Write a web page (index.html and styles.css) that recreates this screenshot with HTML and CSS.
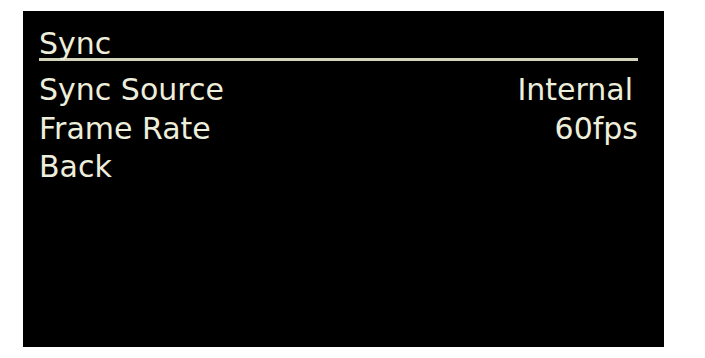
FILE: index.html
```html
<!DOCTYPE html>
<html lang="en">

<head>
    <meta charset="UTF-8">
    <meta name="viewport" content="width=device-width, initial-scale=1.0">
    <title>Sync</title>
    <link rel="stylesheet" href="styles.css">
</head>

<body>
    <div class="menu-screen">
        <!-- Menu title -->
        <div class="menu-title">Sync</div>

        <div class="menu-list">
            <div class="menu-item">
                <span>Sync Source</span>
                <span class="menu-value short">Internal</span>
            </div>
            <div class="menu-item">
                <span>Frame Rate</span>
                <span class="menu-value">60fps</span>
            </div>
            <div class="menu-item">
                <span>Back</span>
            </div>
        </div>
    </div>
</body>

</html>
```

FILE: styles.css
```css
body {
    margin: 0;
    padding: 0;
    background-color: #ffffff;
    font-family: "DejaVu Sans", Verdana, sans-serif;
}

.menu-screen {
    margin: 11px 0 0 23px;
    width: 641px;
    height: 336px;
    box-sizing: border-box;
    padding: 19px 26px 0 16px;
    background-color: #000000;
    color: #eeeedc;
    font-size: 30px;
}

.menu-title {
    line-height: 28px;
    border-bottom: 3px solid #d4d4ba;
}

.menu-list {
    margin-top: 10px;
}

.menu-item {
    display: flex;
    justify-content: space-between;
    line-height: 38.5px;
}

.menu-value.short {
    margin-right: 5px;
}
```
